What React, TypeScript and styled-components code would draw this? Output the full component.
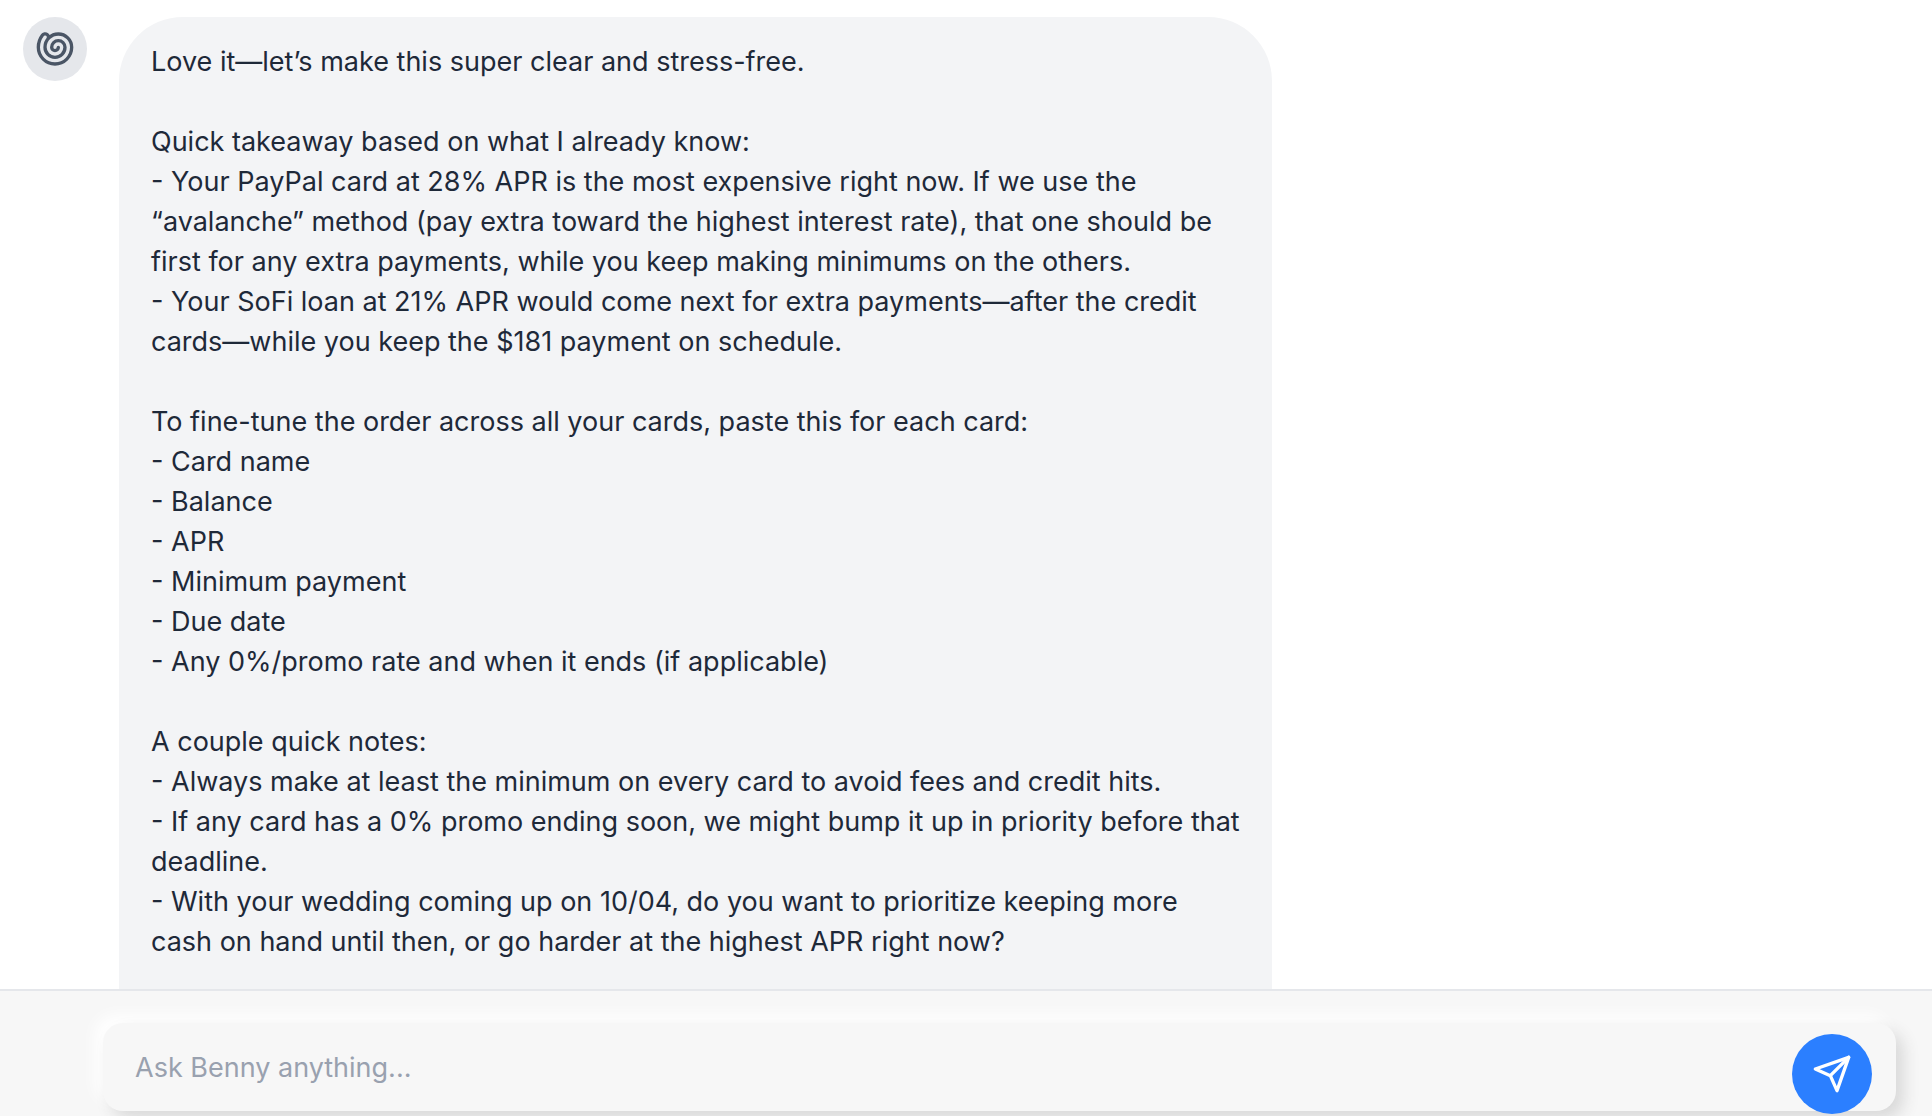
import React, { useState } from "react";
import styled, { createGlobalStyle } from "styled-components";
import { Shell } from "lucide-react";

const GlobalStyle = createGlobalStyle`
  *, *::before, *::after { box-sizing: border-box; }
  body {
    margin: 0;
    background: #ffffff;
    color: #1e2939;
    font-family: Inter, "Liberation Sans", sans-serif;
    font-size: 27px;
    line-height: 40px;
  }
`;

const Page = styled.div`
  display: flex;
  flex-direction: column;
  height: 100vh;
`;

const Messages = styled.main`
  flex: 1;
  min-height: 0;
  display: flex;
  overflow: hidden;
  padding: 17px 23px 0;
`;

const MessageRow = styled.article`
  flex: 1;
  min-width: 0;
  display: flex;
  gap: 32px;
`;

const Avatar = styled.div`
  flex: none;
  display: flex;
  align-items: center;
  justify-content: center;
  width: 64px;
  height: 64px;
  border-radius: 50%;
  background: #e5e7eb;
  color: #4a5565;
`;

const Bubble = styled.div`
  flex: 0 1 1153px;
  min-width: 0;
  padding: 25px 32px 0;
  border-radius: 64px 64px 0 0;
  background: #f3f4f6;
`;

const Paragraph = styled.p`
  margin: 0 0 40px;
  white-space: pre-wrap;
`;

const Footer = styled.footer`
  flex: none;
  border-top: 2px solid #e5e7eb;
  background: #f7f7f7;
  padding: 32px 36px 5px 103px;
  overflow: hidden;
`;

const Composer = styled.form`
  display: flex;
  align-items: flex-start;
  height: 88px;
  padding-right: 24px;
  border-radius: 20px;
  background: #f7f7f7;
  box-shadow: 8px 8px 16px #d9d9d9, -8px -8px 16px #ffffff;
`;

const Field = styled.input`
  flex: 1;
  min-width: 0;
  height: 88px;
  padding: 0 32px;
  border: 0;
  outline: 0;
  background: transparent;
  color: #1e2939;
  font: inherit;
  &::placeholder { color: #99a1af; opacity: 1; }
`;

const SendButton = styled.button`
  flex: none;
  display: flex;
  align-items: center;
  justify-content: center;
  width: 80px;
  height: 80px;
  margin-top: 11px;
  padding: 0;
  border: 0;
  border-radius: 50%;
  background: #2b7fff;
  color: #ffffff;
  cursor: pointer;
`;

const PlaneIcon = () => (
  <svg
    width="40"
    height="40"
    viewBox="0 0 24 24"
    fill="none"
    stroke="currentColor"
    strokeWidth="2"
    strokeLinecap="round"
    strokeLinejoin="round"
    aria-hidden
  >
    <path d="m22 2-7 20-4-9-9-4Z" />
    <path d="M22 2 11 13" />
  </svg>
);

const paragraphs = [
  "Love it—let’s make this super clear and stress-free.",
  `Quick takeaway based on what I already know:
- Your PayPal card at 28% APR is the most expensive right now. If we use the “avalanche” method (pay extra toward the highest interest rate), that one should be first for any extra payments, while you keep making minimums on the others.
- Your SoFi loan at 21% APR would come next for extra payments—after the credit cards—while you keep the $181 payment on schedule.`,
  `To fine-tune the order across all your cards, paste this for each card:
- Card name
- Balance
- APR
- Minimum payment
- Due date
- Any 0%/promo rate and when it ends (if applicable)`,
  `A couple quick notes:
- Always make at least the minimum on every card to avoid fees and credit hits.
- If any card has a 0% promo ending soon, we might bump it up in priority before that deadline.
- With your wedding coming up on 10/04, do you want to prioritize keeping more cash on hand until then, or go harder at the highest APR right now?`,
];

export default function App() {
  const [draft, setDraft] = useState("");
  return (
    <>
      <GlobalStyle />
      <Page>
        <Messages>
          <MessageRow>
            <Avatar>
              <Shell size={40} aria-hidden />
            </Avatar>
            <Bubble>
              {paragraphs.map((text) => (
                <Paragraph key={text}>{text}</Paragraph>
              ))}
            </Bubble>
          </MessageRow>
        </Messages>
        <Footer>
          <Composer onSubmit={(e) => e.preventDefault()}>
            <Field
              type="text"
              aria-label="Message"
              placeholder="Ask Benny anything..."
              value={draft}
              onChange={(e) => setDraft(e.target.value)}
            />
            <SendButton type="submit" aria-label="Send">
              <PlaneIcon />
            </SendButton>
          </Composer>
        </Footer>
      </Page>
    </>
  );
}
